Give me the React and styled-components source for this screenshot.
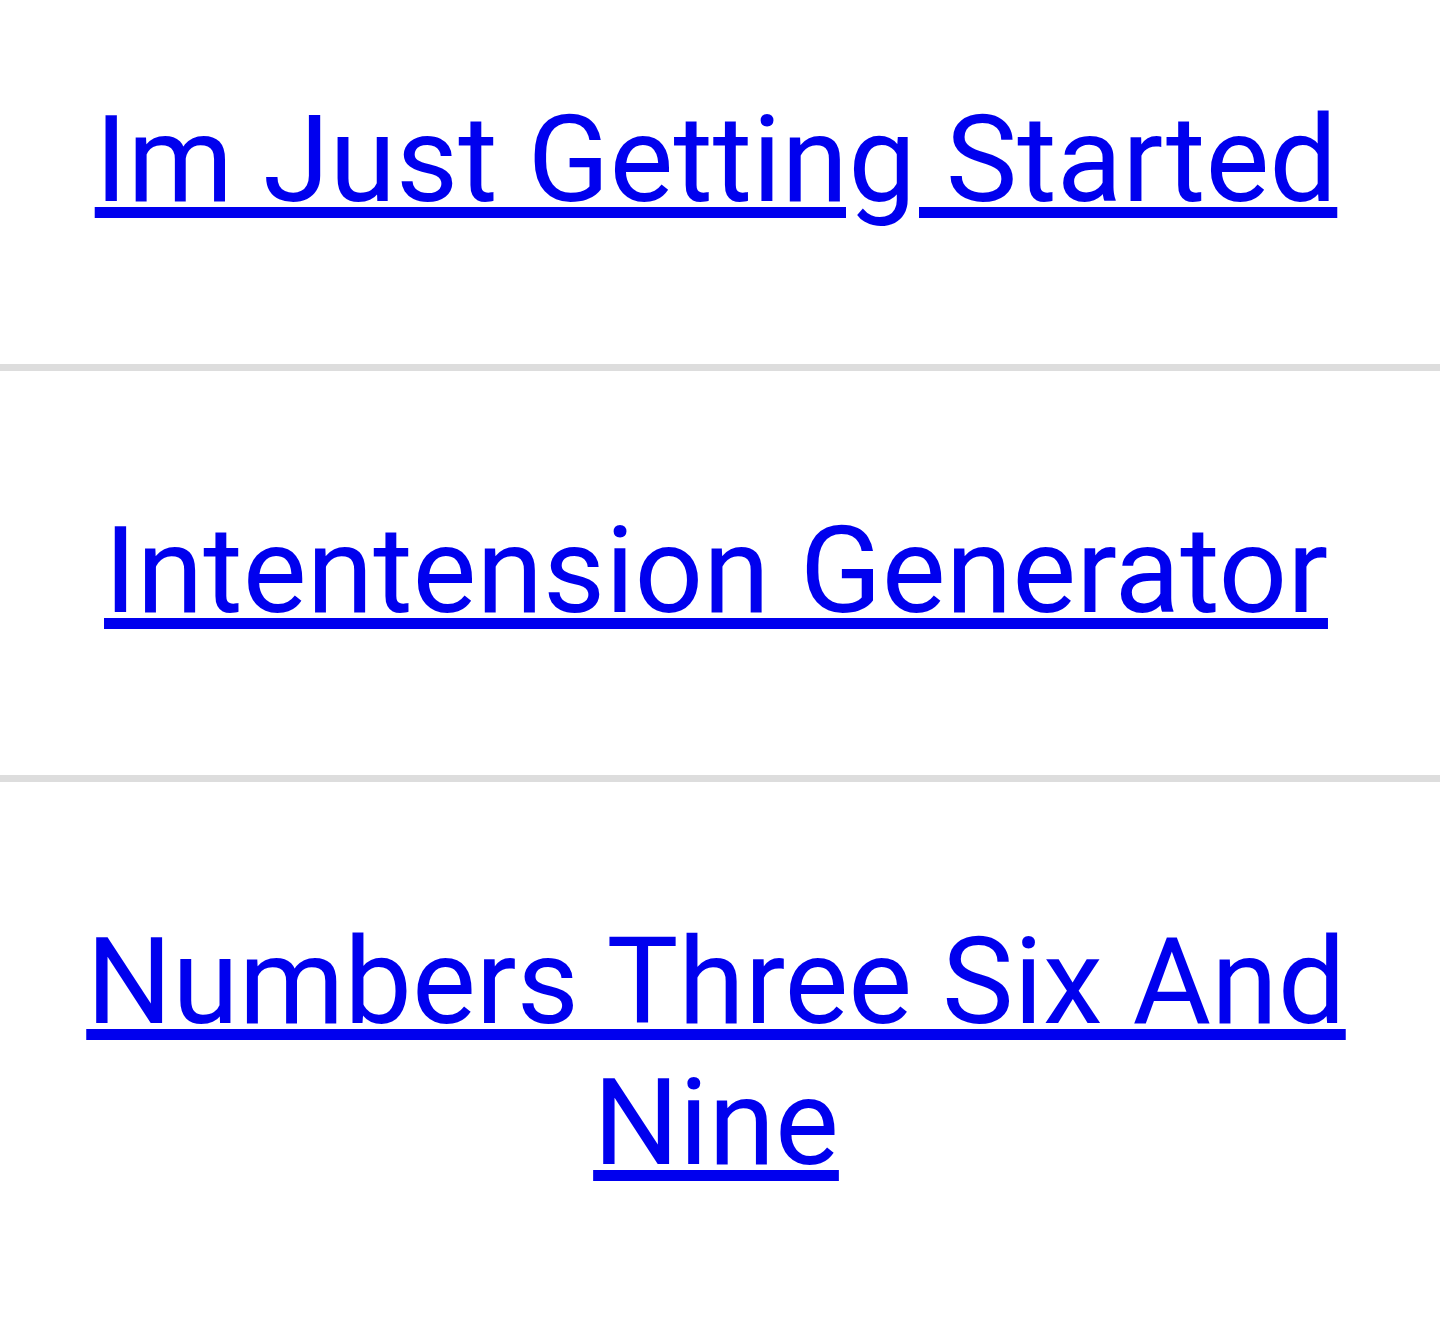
import React from 'react';
import styled, { createGlobalStyle } from 'styled-components';

const GlobalStyle = createGlobalStyle`
  html, body {
    margin: 0;
    padding: 0;
    background: #ffffff;
  }
  body {
    font-family: Roboto, "Liberation Sans", Arial, sans-serif;
  }
`;

const List = styled.ul`
  list-style: none;
  margin: 0;
  padding: 0;
  min-height: 1317px;
`;

const Item = styled.li`
  padding: ${props => (props.first ? '89px' : '129px')} 8px 134px 0;
  border-bottom: ${props => (props.last ? 'none' : '7px solid #dddddd')};
  text-align: center;
  font-size: 120.5px;
  line-height: normal;
`;

const Link = styled.a`
  color: #0000ee;
  text-decoration: underline;
  text-decoration-thickness: 11px;
  text-underline-offset: 6px;
`;

const posts = [
  'Im Just Getting Started',
  'Intentension Generator',
  'Numbers Three Six And Nine',
];

const App = () => {
  return (
    <>
      <GlobalStyle />
      <List>
        {posts.map((title, i) => (
          <Item key={title} first={i === 0} last={i === posts.length - 1}>
            <Link href="#">{title}</Link>
          </Item>
        ))}
      </List>
    </>
  );
};

export default App;
